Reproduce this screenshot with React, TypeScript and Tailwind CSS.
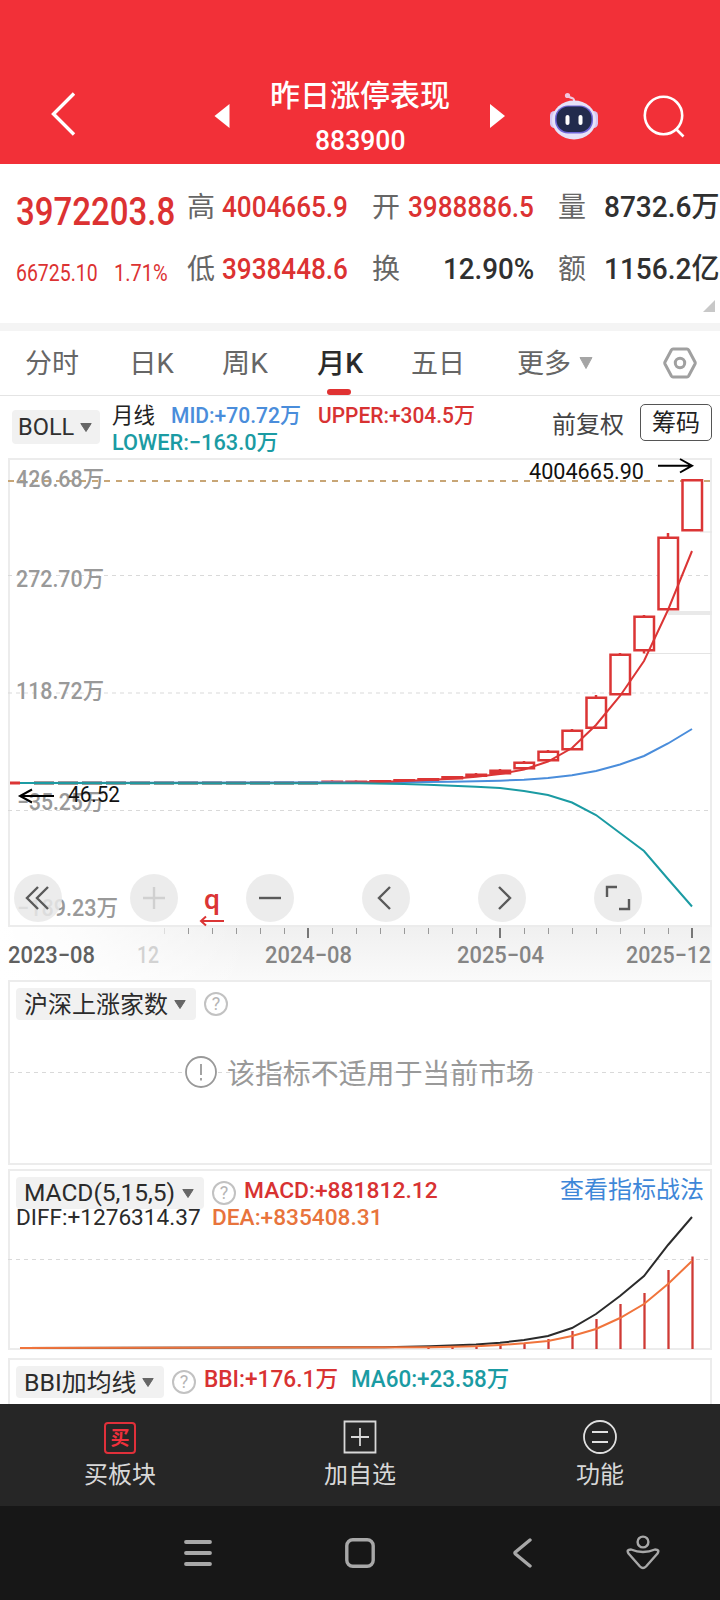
import { useLayoutEffect, useRef, useState } from "react";
import type { ReactNode } from "react";

type Point = [number, number];

const RED = "#db3535";
const TEAL = "#1b9ba3";
const BLUE = "#4a8ddb";
const ORANGE = "#f0743c";

const candles = [
  { x: 692, top: 479, bottom: 531.5, high: 479 },
  { x: 668, top: 536.5, bottom: 610.5, high: 533 },
  { x: 644, top: 615.5, bottom: 651.5, high: 615 },
  { x: 620, top: 653.5, bottom: 695.5, high: 653 },
  { x: 596, top: 696.5, bottom: 729, high: 695 },
  { x: 572, top: 729.5, bottom: 750.5, high: 729 },
  { x: 548, top: 750.5, bottom: 761.5, high: 750 },
  { x: 524, top: 761.5, bottom: 769.5, high: 761 },
  { x: 500, top: 769.5, bottom: 774.5, high: 769 },
  { x: 476, top: 773.5, bottom: 777, high: 773 },
  { x: 452, top: 776, bottom: 779.5, high: 776 },
  { x: 428, top: 778, bottom: 781, high: 778 },
  { x: 404, top: 779, bottom: 782, high: 779 },
  { x: 380, top: 780, bottom: 783, high: 780 },
  { x: 356, top: 780.5, bottom: 784, high: 780.5 },
  { x: 332, top: 780.5, bottom: 784, high: 780.5 },
];

const flatCandles = Array.from({ length: 12 }, (_, i) => 44 + i * 24);

const upper: Point[] = [
  [20, 783], [332, 783], [380, 782], [404, 781], [428, 780], [452, 778.7], [476, 776.7],
  [500, 774], [524, 769.5], [548, 761.5], [572, 748], [596, 725], [620, 696],
  [644, 661], [668, 610], [692, 551],
];
const mid: Point[] = [
  [20, 783], [400, 782.3], [452, 781.7], [476, 781.3], [500, 780.7], [524, 779.7],
  [548, 778], [572, 775.3], [596, 771], [620, 764.5], [644, 756], [668, 743.5], [692, 729],
];
const lower: Point[] = [
  [20, 783], [360, 783.2], [404, 784], [428, 784.7], [452, 785.7], [476, 786.7], [500, 788],
  [524, 791], [548, 795], [572, 802.5], [596, 815], [620, 833], [644, 851], [668, 879], [692, 906.5],
];
const diff: Point[] = [
  [20, 1348], [384, 1347.3], [430, 1346.3], [476, 1344.5], [500, 1342.8], [524, 1340],
  [548, 1336], [572, 1328], [596, 1314], [620, 1296], [644, 1276], [668, 1245], [692, 1217],
];
const dea: Point[] = [
  [20, 1348], [430, 1347.3], [476, 1346.3], [500, 1345], [524, 1343.3], [548, 1341],
  [572, 1336], [596, 1329], [620, 1318], [644, 1304], [668, 1284], [692, 1261],
];
const macdBars: Point[] = [
  [428, 1347], [452, 1346.5], [476, 1346], [500, 1345], [524, 1343], [548, 1339], [572, 1331],
  [596, 1319], [620, 1304], [644, 1293], [668, 1270], [692, 1256.5],
];

const ticks = Array.from({ length: 23 }, (_, i) => 164 + i * 24);

const toPoints = (points: Point[]) => points.map((p) => p.join(",")).join(" ");

// Squeezes or stretches one line of text to the width its class gives it.
function FitText({ className, children }: { className: string; children: ReactNode }) {
  const outer = useRef<HTMLSpanElement>(null);
  const inner = useRef<HTMLSpanElement>(null);
  const [scale, setScale] = useState(1);

  useLayoutEffect(() => {
    if (outer.current && inner.current) {
      setScale(outer.current.offsetWidth / inner.current.offsetWidth);
    }
  }, []);

  return (
    <span ref={outer} className={`inline-block shrink-0 whitespace-nowrap ${className}`}>
      <span ref={inner} className="inline-block origin-left" style={{ transform: `scaleX(${scale})` }}>
        {children}
      </span>
    </span>
  );
}

function Caret({ className = "" }: { className?: string }) {
  return (
    <svg viewBox="0 0 12 9" className={`h-[9px] w-3 shrink-0 ${className}`}>
      <path d="M0.8 0.5H11.2L6 8.5Z" fill="currentColor" stroke="currentColor" strokeLinejoin="round" />
    </svg>
  );
}

function Help() {
  return (
    <span className="grid size-6 shrink-0 place-items-center rounded-full border-2 border-[#c2c2c2] text-[18px] leading-none text-[#b5b5b5]">
      ?
    </span>
  );
}

function Header() {
  return (
    <header className="flex h-[164px] items-start bg-[#f23038] text-white">
      <svg viewBox="0 0 26 46" className="mt-[91px] ml-[50px] h-[46px] w-[26px]" fill="none">
        <path d="M24 2.5L3.500 23L24 43.500" stroke="white" strokeWidth="3.400" />
      </svg>
      <svg viewBox="0 0 15 24" className="mt-[104px] ml-[138px] h-6 w-4">
        <path d="M15 0V24L0 12Z" fill="white" />
      </svg>
      <div className="mt-[76px] ml-10 flex w-[180px] flex-col items-center font-medium">
        <FitText className="w-[180px] text-[30px] leading-10">昨日涨停表现</FitText>
        <FitText className="mt-[5px] w-[90px] text-[28px] leading-10">883900</FitText>
      </div>
      <svg viewBox="0 0 15 24" className="mt-[104px] ml-[40px] h-6 w-[15px]">
        <path d="M0 0V24L15 12Z" fill="white" />
      </svg>
      <svg viewBox="0 0 50 48" className="mt-[92px] ml-[44px] h-12 w-[50px]" fill="none">
        <path d="M25 10C26 4.500 21 7 19.500 4" stroke="#eecbe2" strokeWidth="2.200" />
        <circle cx="18.500" cy="3.500" r="2.600" fill="#f2c5de" />
        <rect x="1" y="19" width="9" height="17" rx="4.500" fill="#d6c6f2" />
        <rect x="40" y="19" width="9" height="17" rx="4.500" fill="#d6c6f2" />
        <ellipse cx="25" cy="28" rx="22" ry="19.500" fill="#e6e2f8" />
        <rect x="6" y="13.500" width="38" height="28" rx="13" fill="#6f66d8" />
        <rect x="7.500" y="14.500" width="35" height="25.500" rx="12" fill="#222b4d" />
        <rect x="16.500" y="23" width="4" height="10" rx="2" fill="white" />
        <rect x="29.500" y="23" width="4" height="10" rx="2" fill="white" />
      </svg>
      <svg viewBox="0 0 44 44" className="mt-[94px] ml-[43px] size-11" fill="none" stroke="white" strokeWidth="2.600">
        <circle cx="21.500" cy="21.500" r="18.700" />
        <path d="M34 35L41.500 42.500" />
      </svg>
    </header>
  );
}

function Quote() {
  return (
    <section className="relative flex h-[159px] text-[29px] leading-[48px] font-medium text-[#303030]">
      <div className="flex w-[187px] shrink-0 flex-col pt-6 pl-4 text-[#dc3232]">
        <FitText className="w-[159px] text-[38px]">3972203.8</FitText>
        <div className="mt-3.5 flex font-normal">
          <FitText className="w-[82px] text-[23px]">66725.10</FitText>
          <FitText className="ml-4 w-[54px] text-[23px]">1.71%</FitText>
        </div>
      </div>
      <div className="flex w-[161px] shrink-0 flex-col gap-3.5 pt-[19px]">
        <div className="flex items-center">
          <span className="w-[35px] pt-px text-[28px] leading-[47px] font-normal text-[#666]">高</span>
          <FitText className="w-[126px] text-[#dc3232]">4004665.9</FitText>
        </div>
        <div className="flex items-center">
          <span className="w-[35px] pt-px text-[28px] leading-[47px] font-normal text-[#666]">低</span>
          <FitText className="w-[126px] text-[#dc3232]">3938448.6</FitText>
        </div>
      </div>
      <div className="ml-6 flex w-[162px] shrink-0 flex-col gap-3.5 pt-[19px]">
        <div className="flex items-center justify-between">
          <span className="pt-px text-[28px] leading-[47px] font-normal text-[#666]">开</span>
          <FitText className="w-[126px] text-[#dc3232]">3988886.5</FitText>
        </div>
        <div className="flex items-center justify-between">
          <span className="pt-px text-[28px] leading-[47px] font-normal text-[#666]">换</span>
          <FitText className="w-[91px]">12.90%</FitText>
        </div>
      </div>
      <div className="ml-6 flex w-[161px] shrink-0 flex-col gap-3.5 pt-[19px]">
        <div className="flex items-center justify-between">
          <span className="pt-px text-[28px] leading-[47px] font-normal text-[#666]">量</span>
          <FitText className="w-[115px]">8732.6万</FitText>
        </div>
        <div className="flex items-center justify-between">
          <span className="pt-px text-[28px] leading-[47px] font-normal text-[#666]">额</span>
          <FitText className="w-[115px]">1156.2亿</FitText>
        </div>
      </div>
      <svg viewBox="0 0 12 12" className="absolute right-[5px] bottom-[11px] size-3">
        <path d="M12 0V12H0Z" fill="#c8c8c8" />
      </svg>
    </section>
  );
}

function Tabs() {
  return (
    <nav className="flex h-[65px] border-b border-[#e4e4e4] text-[27px] leading-[67px] text-[#666]">
      <FitText className="ml-[25px] w-[54px]">分时</FitText>
      <FitText className="ml-[50px] w-[45px]">日K</FitText>
      <FitText className="ml-[48px] w-[46px]">周K</FitText>
      <div className="ml-[49px] flex w-[46px] flex-col items-center font-medium text-[#2b2b2b]">
        <FitText className="h-[58px] w-[46px]">月K</FitText>
        <span className="mr-[3px] h-1.5 w-6 rounded-full bg-[#e03232]" />
      </div>
      <FitText className="ml-[48px] w-[54px]">五日</FitText>
      <FitText className="ml-[52px] w-[54px]">更多</FitText>
      <svg viewBox="0 0 14 12" className="mt-[26px] ml-2 h-3 w-3.5 text-[#a5a5a5]">
        <path d="M1 .5H13L7 11.5Z" fill="currentColor" stroke="currentColor" strokeLinejoin="round" />
      </svg>
      <svg viewBox="0 0 34 34" className="mt-[15px] ml-[70px] size-[34px]" fill="none" stroke="#a0a0a0" strokeLinejoin="round">
        <path d="M10 3H24Q25 3 25.6 4L32 16Q32.5 17 32 18L25.6 30Q25 31 24 31H10Q9 31 8.4 30L2 18Q1.5 17 2 16L8.4 4Q9 3 10 3Z" strokeWidth="3" />
        <circle cx="17" cy="17" r="4.700" strokeWidth="3" />
      </svg>
    </nav>
  );
}

function BollLegend() {
  return (
    <div className="flex h-[62px] items-start text-[22px] leading-[27px]">
      <div className="mt-3.5 ml-3 flex h-[34px] w-[88px] items-center rounded bg-[#f1f1f1] pl-1.5 text-[24px] text-[#303030]">
        <FitText className="w-[56px]">BOLL</FitText>
        <Caret className="ml-1.5 text-[#666]" />
      </div>
      <div className="mt-1.5 ml-3 w-[420px] font-medium">
        <div className="flex">
          <FitText className="w-[43px] font-normal text-[#222]">月线</FitText>
          <FitText className="ml-[16px] w-[130px] text-[#4a8ddb]">MID:+70.72万</FitText>
          <FitText className="ml-[17px] w-[157px] text-[#d83232]">UPPER:+304.5万</FitText>
        </div>
        <FitText className="w-[166px] text-[#1b9ba3]">LOWER:−163.0万</FitText>
      </div>
      <FitText className="mt-4 ml-5 w-[72px] text-[24px] text-[#444]">前复权</FitText>
      <div className="mt-2 ml-4 flex h-[37px] w-[72px] items-center justify-center rounded-[5px] border border-[#555] pt-px text-[24px] text-[#222]">
        <FitText className="w-[48px]">筹码</FitText>
      </div>
    </div>
  );
}

function RoundButton({ faded, children }: { faded?: boolean; children: ReactNode }) {
  return (
    <button className="grid size-12 place-items-center rounded-full bg-[#e9e9e9]/85">
      <svg
        viewBox="0 0 48 48"
        className={`size-12 ${faded ? "text-[#d0d0d0]" : "text-[#5a5a5a]"}`}
        fill="none"
        stroke="currentColor"
        strokeWidth="2.400"
      >
        {children}
      </svg>
    </button>
  );
}

function MainChart() {
  return (
    <section className="relative h-[469px]">
      <svg viewBox="0 458 720 469" className="block h-[469px] w-full" fill="none">
        <rect x="9" y="459" width="702" height="467" stroke="#ececec" strokeWidth="2" />
        <path d="M8 575.500H712M8 693H712M8 810.500H712" stroke="#d9d9d9" strokeDasharray="4 4" />
        <path d="M8 481H712" stroke="#c8a676" strokeWidth="2" strokeDasharray="6 6" />
        <path d="M700 532H712M644 653.500H712" stroke="#e4e4e4" strokeWidth="1.200" />
        <path d="M668 613H712" stroke="#e9e9e9" strokeWidth="4" />

        <g fontSize="23" fontWeight="500" fill="#999">
          <text x="16" y="487" textLength="88" lengthAdjust="spacingAndGlyphs">426.68万</text>
          <text x="16" y="586.500" textLength="88" lengthAdjust="spacingAndGlyphs">272.70万</text>
          <text x="16" y="698.500" textLength="88" lengthAdjust="spacingAndGlyphs">118.72万</text>
          <text x="17" y="810" textLength="87" lengthAdjust="spacingAndGlyphs">−35.25万</text>
          <text x="17" y="916" textLength="101" lengthAdjust="spacingAndGlyphs">−189.23万</text>
        </g>
        <g fontSize="21.500" fill="#111">
          <text x="529" y="479" textLength="115" lengthAdjust="spacingAndGlyphs">4004665.90</text>
          <text x="68" y="802" textLength="52" lengthAdjust="spacingAndGlyphs">46.52</text>
        </g>
        <path d="M658 465.700H692M680 459L692 465.700L680 472.500M54 796H20M32 789.500L20 796L32 802.500" stroke="#000" strokeWidth="2" />

        {flatCandles.map((x) => (
          <rect key={x} x={x - 10} y="781" width="20" height="4" fill="#a59a98" />
        ))}
        {candles.map((c) => (
          <g key={c.x} stroke={RED} strokeWidth="2.500">
            <path d={`M${c.x} ${c.high}V${c.top + 1}`} />
            <rect
              x={c.x - 9.5}
              y={c.top + 1.25}
              width="19.500"
              height={Math.max(0.5, c.bottom - c.top - 2.5)}
              fill={c.bottom - c.top < 6 ? RED : "white"}
            />
          </g>
        ))}
        <path d="M644 651V653.500" stroke={RED} strokeWidth="2.500" />
        <path d="M10 783H20" stroke={RED} strokeWidth="3" />
        <polyline points={toPoints(mid)} stroke={BLUE} strokeWidth="2" />
        <polyline points={toPoints(upper)} stroke={RED} strokeWidth="2" />
        <polyline points={toPoints(lower)} stroke={TEAL} strokeWidth="2" />

        <text x="204" y="909" fontSize="28" fontWeight="500" fill={RED}>q</text>
        <path d="M224 921H201M206 916.500L201 921L206 925.500" stroke={RED} strokeWidth="2" />
      </svg>
      <div className="absolute bottom-[5px] left-3.5 flex gap-[68px]">
        <RoundButton>
          <path d="M34 13L23 24L34 35M24 13L13 24L24 35" />
        </RoundButton>
        <RoundButton faded>
          <path d="M24 13V35M13 24H35" />
        </RoundButton>
        <RoundButton>
          <path d="M13 24H35" />
        </RoundButton>
        <RoundButton>
          <path d="M28 13L17 24L28 35" />
        </RoundButton>
        <RoundButton>
          <path d="M21 13L32 24L21 35" />
        </RoundButton>
        <RoundButton>
          <path d="M13 23V13H23M25 35H35V25" />
        </RoundButton>
      </div>
    </section>
  );
}

function TimeAxis() {
  return (
    <div className="mr-2 h-[53px] bg-linear-to-b from-[#f0f0f0] to-[#fafafa]">
      <svg viewBox="0 927 712 53" className="block h-[53px] w-[712px]">
        <defs>
          <linearGradient id="axisFade">
            <stop offset="0" stopColor="white" />
            <stop offset="0.300" stopColor="white" stopOpacity="0.800" />
            <stop offset="1" stopColor="white" stopOpacity="0" />
          </linearGradient>
        </defs>
        <rect y="927" width="250" height="53" fill="url(#axisFade)" />
        {ticks.map((x, i) =>
          x === 308 || x === 500 || x === 692 ? (
            <rect key={x} x={x - 1} y="928" width="2" height="10" fill="#777" />
          ) : (
            <rect key={x} x={x} y="928" width="1" height="6" fill={i === 0 ? "#ddd" : "#999"} />
          ),
        )}
        <g fontSize="23.500" fontWeight="500" fill="#858585">
          <text x="8" y="962.500" fill="#606060" textLength="87" lengthAdjust="spacingAndGlyphs">2023−08</text>
          <text x="137" y="962.500" fill="#d2d2d2" textLength="22" lengthAdjust="spacingAndGlyphs">12</text>
          <text x="265" y="962.500" textLength="87" lengthAdjust="spacingAndGlyphs">2024−08</text>
          <text x="457" y="962.500" textLength="87" lengthAdjust="spacingAndGlyphs">2025−04</text>
          <text x="626" y="962.500" textLength="85" lengthAdjust="spacingAndGlyphs">2025−12</text>
        </g>
      </svg>
    </div>
  );
}

function RisersPanel() {
  return (
    <section className="mx-2 h-[185px] border-2 border-[#ececec]">
      <div className="flex items-center pt-1.5 pl-1.5">
        <div className="flex h-8 w-[180px] items-center rounded bg-[#f1f1f1] pl-2 text-[24px] text-[#2b2b2b]">
          <FitText className="w-[144px] pt-0.5">沪深上涨家数</FitText>
          <Caret className="ml-1.5 text-[#666]" />
        </div>
        <span className="ml-2">
          <Help />
        </span>
      </div>
      <div className="mt-[34px] flex h-9 items-center bg-[linear-gradient(90deg,#d9d9d9_50%,transparent_50%)] bg-[length:8px_1px] bg-[position:0_18px] bg-repeat-x pl-[175px] text-[28px] text-[#999]">
        <svg viewBox="0 0 32 32" className="size-8" fill="none" stroke="#999" strokeWidth="1.800">
          <circle cx="16" cy="16" r="15" fill="white" />
          <path d="M16 8V19M16 22V24.500" />
        </svg>
        <FitText className="ml-2.5 w-[307px] pt-1.5">该指标不适用于当前市场</FitText>
      </div>
    </section>
  );
}

function MacdPanel() {
  return (
    <section className="relative mt-1 h-[181px]">
      <svg viewBox="0 1169 720 181" className="absolute inset-0 h-[181px] w-full" fill="none">
        <rect x="9" y="1170" width="702" height="179" stroke="#ececec" strokeWidth="2" />
        <path d="M8 1259.500H712" stroke="#d9d9d9" strokeDasharray="4 4" />
        {macdBars.map(([x, y]) => (
          <path key={x} d={`M${x + 0.5} ${y}V1349`} stroke="#cf3a35" strokeWidth="2.300" />
        ))}
        <polyline points={toPoints(diff)} stroke="#2b2b2b" strokeWidth="2" />
        <polyline points={toPoints(dea)} stroke={ORANGE} strokeWidth="2" />
      </svg>
      <div className="relative px-4 pt-2 text-[22px] font-medium">
        <div className="flex h-[33px] items-start">
          <div className="flex h-8 w-[188px] items-center rounded bg-[#f1f1f1] pl-2 text-[24px] font-normal text-[#2b2b2b]">
            <FitText className="w-[151px]">MACD(5,15,5)</FitText>
            <Caret className="ml-[7px] text-[#666]" />
          </div>
          <span className="mt-1 ml-2 font-normal">
            <Help />
          </span>
          <FitText className="ml-2 w-[194px] leading-[27px] text-[#d83232]">MACD:+881812.12</FitText>
          <FitText className="-mt-px ml-auto w-[144px] text-[24px] leading-7 font-normal text-[#3e87d8]">查看指标战法</FitText>
        </div>
        <div className="flex leading-[15px]">
          <FitText className="w-[185px] font-normal text-[#2b2b2b]">DIFF:+1276314.37</FitText>
          <FitText className="ml-[11px] w-[171px] text-[#e8743c]">DEA:+835408.31</FitText>
        </div>
      </div>
    </section>
  );
}

function BbiPanel() {
  return (
    <section className="mx-2 mt-2 flex h-[46px] items-start border-2 border-b-0 border-[#ececec] pt-1.5 pl-1.5">
      <div className="flex h-8 w-[148px] items-center rounded bg-[#f1f1f1] pl-2 text-[24px] text-[#2b2b2b]">
        <FitText className="w-[112px] pt-px">BBI加均线</FitText>
        <Caret className="ml-1.5 text-[#666]" />
      </div>
      <span className="mt-1 ml-2">
        <Help />
      </span>
      <FitText className="ml-2 w-[134px] text-[23px] leading-[27px] font-medium text-[#d83232]">BBI:+176.1万</FitText>
      <FitText className="ml-[13px] w-[158px] text-[23px] leading-[27px] font-medium text-[#1b9ba3]">MA60:+23.58万</FitText>
    </section>
  );
}

function Toolbar() {
  return (
    <div className="grid h-[102px] grid-cols-3 bg-[#262626] text-[24px] leading-7 text-[#d8d8d8]">
      <div className="flex flex-col items-center pt-[18px]">
        <span className="grid size-8 place-items-center rounded border-2 border-[#e0303a] text-[19px] leading-none font-bold text-[#f0303c]">买</span>
        <span className="mt-[7px]">买板块</span>
      </div>
      <div className="flex flex-col items-center pt-[16px]">
        <svg viewBox="0 0 34 34" className="size-[34px]" fill="none" stroke="#d8d8d8" strokeWidth="1.800">
          <path d="M1.500 1.500H32.500V32.500H1.500ZM17 8V26M8 17H26" />
        </svg>
        <span className="mt-[7px]">加自选</span>
      </div>
      <div className="flex flex-col items-center pt-4">
        <svg viewBox="0 0 34 34" className="size-[34px]" fill="none" stroke="#e0e0e0" strokeWidth="1.800">
          <circle cx="17" cy="17" r="16" />
          <path d="M9 12H25M9 22H25" />
        </svg>
        <span className="mt-[7px]">功能</span>
      </div>
    </div>
  );
}

function SystemNav() {
  return (
    <div className="flex h-[94px] items-center bg-[#171717] text-[#a8a8a8]">
      <svg viewBox="0 0 28 28" className="ml-[184px] size-7" stroke="currentColor" strokeWidth="3.800" strokeLinecap="round">
        <path d="M2 3H26M2 14H26M2 25H26" />
      </svg>
      <svg viewBox="0 0 30 30" className="ml-[133px] size-[30px]" fill="none" stroke="currentColor" strokeWidth="3.400">
        <rect x="1.800" y="1.800" width="26.400" height="26.400" rx="6" />
      </svg>
      <svg viewBox="0 0 20 30" className="ml-[138px] h-[30px] w-5" fill="none" stroke="currentColor" strokeWidth="3.400" strokeLinecap="round" strokeLinejoin="round">
        <path d="M17 2L2.500 14Q1.500 15 2.500 16L17 28" />
      </svg>
      <svg viewBox="0 0 34 36" className="mb-0.5 ml-[93px] h-9 w-[34px]" fill="none" stroke="currentColor" strokeWidth="2.400" strokeLinejoin="round">
        <circle cx="17" cy="8" r="5.400" />
        <path d="M5 15.500Q17 20.500 29 15.500Q34 15.500 31.500 19.500L20 32.500Q17 35.500 14 32.500L2.500 19.500Q0 15.500 5 15.500Z" />
      </svg>
    </div>
  );
}

export default function App() {
  return (
    <main className="h-[1600px] w-[720px] overflow-hidden bg-white font-['Roboto','Noto_Sans_CJK_SC',sans-serif]">
      <Header />
      <Quote />
      <div className="h-2 bg-[#f4f4f4]" />
      <Tabs />
      <BollLegend />
      <MainChart />
      <TimeAxis />
      <RisersPanel />
      <MacdPanel />
      <BbiPanel />
      <Toolbar />
      <SystemNav />
    </main>
  );
}
